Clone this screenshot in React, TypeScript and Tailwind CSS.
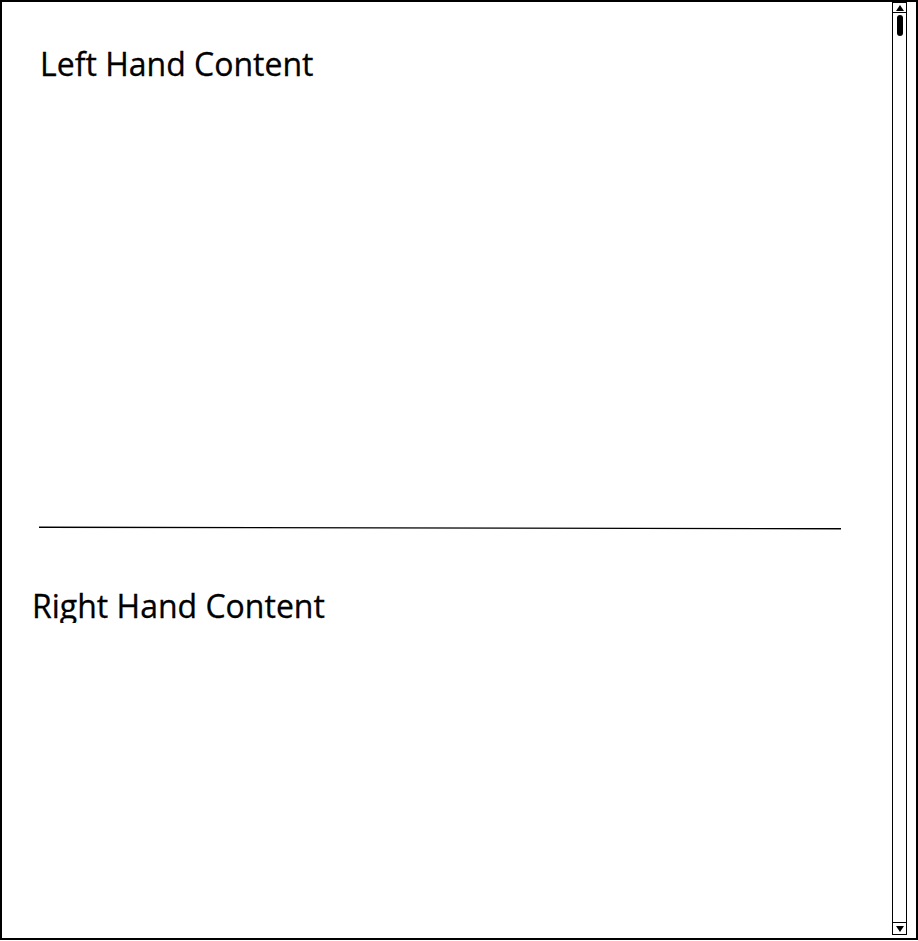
import React from 'react'

function Scrollbar() {
  return (
    <div className="flex w-[15px] flex-col border-[1.5px] border-black bg-white">
      <div className="flex h-[10px] items-center justify-center border-b-[1.5px] border-black">
        <svg width="8" height="6" viewBox="0 0 8 6">
          <polygon points="4,0 8,6 0,6" fill="black" />
        </svg>
      </div>
      <div className="flex flex-1 flex-col items-center pt-[2px]">
        <div className="h-[21px] w-[6px] rounded-[3px] bg-black" />
      </div>
      <div className="flex h-[12px] items-center justify-center border-t-[1.5px] border-black">
        <svg width="8" height="6" viewBox="0 0 8 6">
          <polygon points="0,0 8,0 4,6" fill="black" />
        </svg>
      </div>
    </div>
  )
}

export default function App() {
  return (
    <div className="h-[941px] w-[918px] bg-white" style={{ fontFamily: '"Open Sans", "Noto Sans", sans-serif' }}>
      <div className="flex h-[940px] w-[918px] border-2 border-black">
        <div className="flex flex-1 flex-col">
          {/* top panel */}
          <div className="h-[524px] pl-[38px] pt-[42px]">
            <h1 className="text-[32px] leading-[40px] text-black [-webkit-text-stroke:0.3px_black]">Left Hand Content</h1>
          </div>

          {/* divider */}
          <svg className="ml-[37px]" width="802" height="4" viewBox="0 0 802 4">
            <line x1="0" y1="1.2" x2="802" y2="2.8" stroke="black" strokeWidth="1.4" />
          </svg>

          {/* bottom panel */}
          <div className="pl-[30px] pt-[56px]">
            <div className="h-[37px] overflow-hidden">
              <h2 className="text-[32px] leading-[40px] text-black [-webkit-text-stroke:0.3px_black]">Right Hand Content</h2>
            </div>
          </div>
        </div>
        <div className="flex pb-[3px] pr-[9px] pt-0">
          <Scrollbar />
        </div>
      </div>
    </div>
  )
}
